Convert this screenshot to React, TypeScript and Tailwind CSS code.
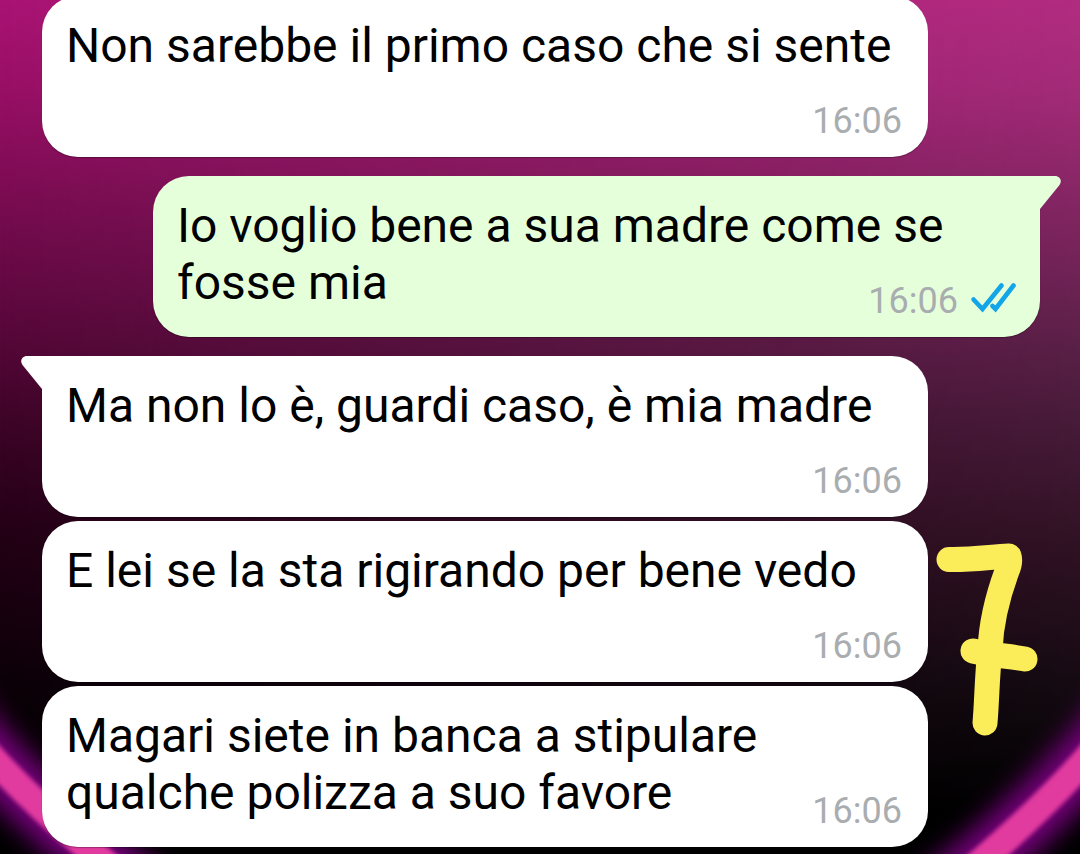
type Message = { text: string; time: string; outgoing?: boolean; first?: boolean };

const messages: Message[] = [
  { text: "Non sarebbe il primo caso che si sente", time: "16:06" },
  { text: "Io voglio bene a sua madre come se fosse mia", time: "16:06", outgoing: true, first: true },
  { text: "Ma non lo è, guardi caso, è mia madre", time: "16:06", first: true },
  { text: "E lei se la sta rigirando per bene vedo", time: "16:06" },
  { text: "Magari siete in banca a stipulare qualche polizza a suo favore", time: "16:06" },
];

function Wallpaper() {
  return (
    <svg className="absolute inset-0 h-full w-full" viewBox="0 0 1080 854" preserveAspectRatio="none" aria-hidden="true">
      <defs>
        <linearGradient id="left" x1="0" y1="0" x2="0" y2="1">
          <stop offset="0" stopColor="#a91373" />
          <stop offset="0.1" stopColor="#990f66" />
          <stop offset="0.22" stopColor="#7c0c53" />
          <stop offset="0.4" stopColor="#550738" />
          <stop offset="0.5" stopColor="#3c0426" />
          <stop offset="0.62" stopColor="#240016" />
          <stop offset="0.8" stopColor="#0c0008" />
          <stop offset="0.95" stopColor="#000000" />
        </linearGradient>
        <linearGradient id="right" x1="0" y1="0" x2="0" y2="1">
          <stop offset="0" stopColor="#b12c80" />
          <stop offset="0.1" stopColor="#a32b78" />
          <stop offset="0.22" stopColor="#882666" />
          <stop offset="0.4" stopColor="#5b2048" />
          <stop offset="0.5" stopColor="#461a38" />
          <stop offset="0.62" stopColor="#331226" />
          <stop offset="0.8" stopColor="#150a12" />
          <stop offset="0.95" stopColor="#000000" />
        </linearGradient>
        <linearGradient id="fade" x1="0" y1="0" x2="1" y2="0">
          <stop offset="0" stopColor="#000" />
          <stop offset="1" stopColor="#fff" />
        </linearGradient>
        <mask id="blend">
          <rect width="1080" height="854" fill="url(#fade)" />
        </mask>
        <filter id="glow" filterUnits="userSpaceOnUse" x="-100" y="600" width="1300" height="400">
          <feGaussianBlur stdDeviation="13" />
        </filter>
        <filter id="soft" filterUnits="userSpaceOnUse" x="-100" y="600" width="1300" height="400">
          <feGaussianBlur stdDeviation="2" />
        </filter>
      </defs>
      <rect width="1080" height="854" fill="url(#left)" />
      <rect width="1080" height="854" fill="url(#right)" mask="url(#blend)" />
      <g fill="none">
        <g stroke="#74067a" strokeWidth="58" filter="url(#glow)">
          <path d="M-60 694Q10 792 150 898" />
          <path d="M1140 692Q1070 792 932 902" />
        </g>
        <g stroke="#e23a9f" strokeWidth="27" filter="url(#soft)">
          <path d="M-60 694Q10 792 150 898" />
          <path d="M1140 692Q1070 792 932 902" />
        </g>
      </g>
    </svg>
  );
}

function Tail({ outgoing }: { outgoing?: boolean }) {
  return outgoing ? (
    <svg className="absolute top-0 -right-[21px] h-[34px] w-[22px] text-[#e5ffdb]" viewBox="0 0 22 34" aria-hidden="true">
      <path fill="currentColor" d="M0 0H16C21 0 23.500 5 20.500 9L1 33H0Z" />
    </svg>
  ) : (
    <svg className="absolute top-0 -left-[21px] h-[34px] w-[22px] text-white" viewBox="0 0 22 34" aria-hidden="true">
      <path fill="currentColor" d="M22 0H6C1 0 -1.500 5 1.500 9L21 33H22Z" />
    </svg>
  );
}

function ReadTicks() {
  return (
    <svg
      className="h-[34px] w-[46px]"
      viewBox="0 0 46 34"
      fill="none"
      stroke="#12a5e8"
      strokeWidth="4.600"
      strokeLinecap="round"
      role="img"
      aria-label="Letto"
    >
      <path d="M3.500 19.500L12.500 29L31.500 5.500" />
      <path d="M22.500 26L25.500 29L43.500 5.500" />
    </svg>
  );
}

function Bubble({ text, time, outgoing, first }: Message) {
  const side = outgoing ? "ml-[111px] px-6 bg-[#e5ffdb]" : "mr-[112px] pl-6 pr-[26px] bg-white";
  const corner = first ? (outgoing ? "rounded-tr-none" : "rounded-tl-none") : "";
  const gap = first ? "mt-[19px]" : "mt-1";
  return (
    <li className={`relative rounded-[36px] pt-[21px] pb-[15px] shadow-[0_1px_1px_rgba(0,0,0,0.3)] ${side} ${corner} ${gap}`}>
      {first && <Tail outgoing={outgoing} />}
      <p className="flow-root text-[48px] leading-[57px] text-black">
        {text}
        <span className="float-right mt-[26px] flex items-start gap-3 pl-3 text-[36px] leading-[42px] text-[#a9adb0]">
          <time>{time}</time>
          {outgoing && <ReadTicks />}
        </span>
      </p>
    </li>
  );
}

export default function App() {
  return (
    <main className="relative min-h-screen overflow-hidden bg-black font-['Roboto',sans-serif]">
      <Wallpaper />
      <ul className="relative -mt-2 flex flex-col pr-10 pb-[6px] pl-[42px]">
        {messages.map((message) => (
          <Bubble key={message.text} {...message} />
        ))}
      </ul>
      <svg
        className="absolute top-[540px] right-[40px] h-[200px] w-[106px]"
        viewBox="934 540 106 200"
        fill="none"
        stroke="#fbec5a"
        strokeWidth="25"
        strokeLinecap="round"
        strokeLinejoin="round"
        role="img"
        aria-label="7"
      >
        <path d="M949 559.500C972 560 990 557 1009 556Q1011 562 1007 571C997 598 991 625 990 650C987 675 987 700 985 723" />
        <path d="M973 651C990 655 1008 656 1025 659" />
      </svg>
    </main>
  );
}
